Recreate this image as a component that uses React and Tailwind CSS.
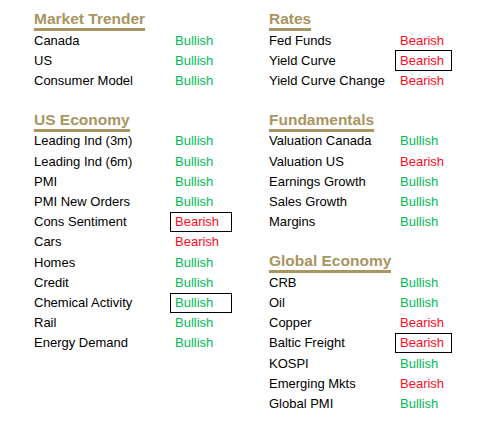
import React from 'react';

const left = [
  { head: 'Market Trender' },
  { label: 'Canada', value: 'Bullish' },
  { label: 'US', value: 'Bullish' },
  { label: 'Consumer Model', value: 'Bullish' },
  {},
  { head: 'US Economy' },
  { label: 'Leading Ind (3m)', value: 'Bullish' },
  { label: 'Leading Ind (6m)', value: 'Bullish' },
  { label: 'PMI', value: 'Bullish' },
  { label: 'PMI New Orders', value: 'Bullish' },
  { label: 'Cons Sentiment', value: 'Bearish', boxed: true },
  { label: 'Cars', value: 'Bearish' },
  { label: 'Homes', value: 'Bullish' },
  { label: 'Credit', value: 'Bullish' },
  { label: 'Chemical Activity', value: 'Bullish', boxed: true },
  { label: 'Rail', value: 'Bullish' },
  { label: 'Energy Demand', value: 'Bullish' },
];

const right = [
  { head: 'Rates' },
  { label: 'Fed Funds', value: 'Bearish' },
  { label: 'Yield Curve', value: 'Bearish', boxed: true },
  { label: 'Yield Curve Change', value: 'Bearish' },
  {},
  { head: 'Fundamentals' },
  { label: 'Valuation Canada', value: 'Bullish' },
  { label: 'Valuation US', value: 'Bearish' },
  { label: 'Earnings Growth', value: 'Bullish' },
  { label: 'Sales Growth', value: 'Bullish' },
  { label: 'Margins', value: 'Bullish' },
  {},
  { head: 'Global Economy' },
  { label: 'CRB', value: 'Bullish' },
  { label: 'Oil', value: 'Bullish' },
  { label: 'Copper', value: 'Bearish' },
  { label: 'Baltic Freight', value: 'Bearish', boxed: true },
  { label: 'KOSPI', value: 'Bullish' },
  { label: 'Emerging Mkts', value: 'Bearish' },
  { label: 'Global PMI', value: 'Bullish' },
];

// one spreadsheet-like row
const Row = ({ row, labelW, valueW }) => {
  if (row.head) {
    return (
      <div className="h-[20.2px] flex items-end">
        <span className="translate-y-[1px] text-[15.5px] font-bold leading-none text-[#a8955f] border-b-[3px] border-[#a8955f] pb-[2px]">
          {row.head}
        </span>
      </div>
    );
  }
  if (!row.label) return <div className="h-[20.2px]" />;

  const color = row.value === 'Bullish' ? 'text-[#00bb55]' : 'text-[#ff0a1e]';
  return (
    <div className="h-[20.2px] flex items-stretch text-[13px]">
      <div className={`${labelW} flex items-center text-black`}>{row.label}</div>
      <div
        className={`${valueW} flex items-center pl-[4px] ${color} ${
          row.boxed ? 'border border-black' : 'border border-transparent'
        }`}
      >
        {row.value}
      </div>
    </div>
  );
};

export default function App() {
  return (
    <div
      className="w-[487px] h-[424px] bg-white flex pt-[10px] pl-[34px]"
      style={{ fontFamily: '"Liberation Sans", Arial, sans-serif' }}
    >
      <div className="flex flex-col w-[235px]">
        {left.map((row, i) => (
          <Row key={i} row={row} labelW="w-[136px]" valueW="w-[62px]" />
        ))}
      </div>
      <div className="flex flex-col">
        {right.map((row, i) => (
          <Row key={i} row={row} labelW="w-[126px]" valueW="w-[57px]" />
        ))}
      </div>
    </div>
  );
}
